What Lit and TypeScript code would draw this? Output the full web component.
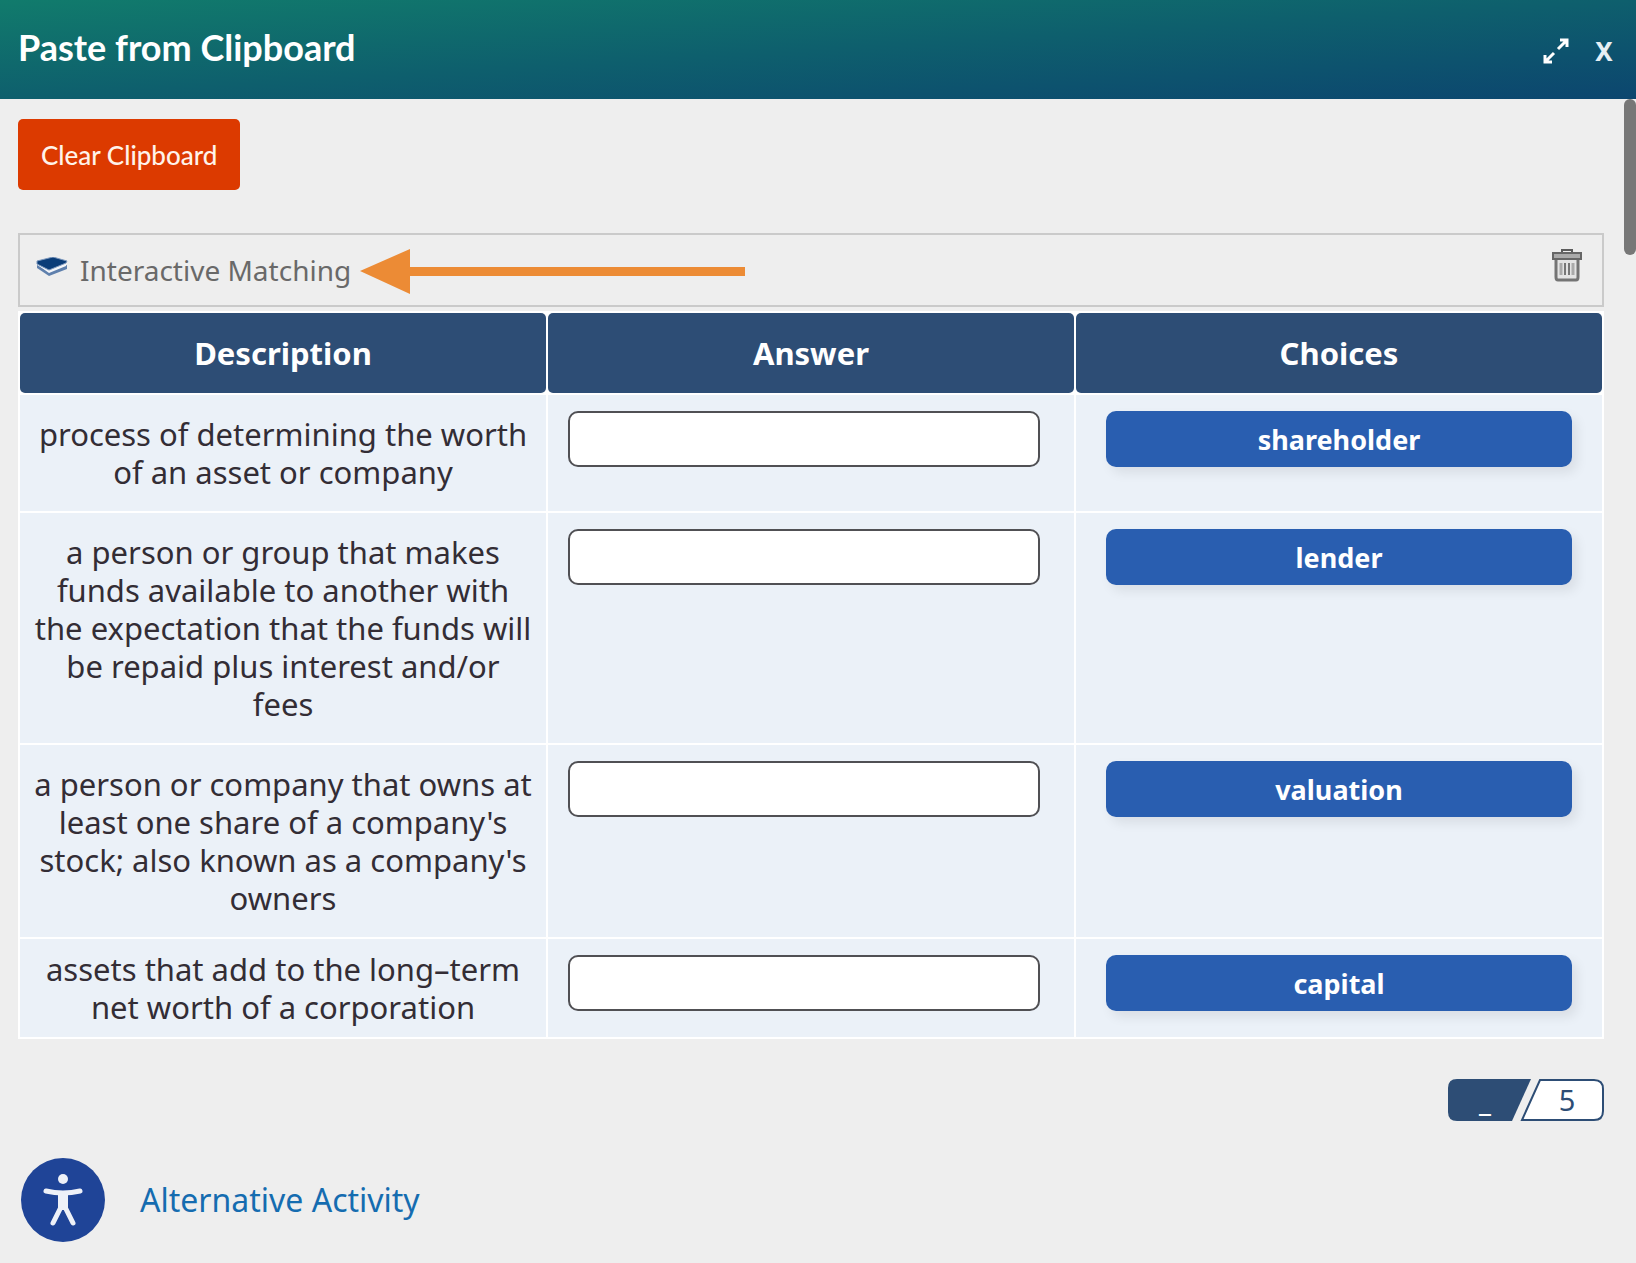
import { LitElement, html, css, svg } from "lit";
import { customElement, state } from "lit/decorators.js";

interface Pair {
  description: string;
  choice: string;
}

const PAIRS: Pair[] = [
  { description: "process of determining the worth of an asset or company", choice: "shareholder" },
  {
    description:
      "a person or group that makes funds available to another with the expectation that the funds will be repaid plus interest and/or fees",
    choice: "lender",
  },
  {
    description:
      "a person or company that owns at least one share of a company's stock; also known as a company's owners",
    choice: "valuation",
  },
  { description: "assets that add to the long\u2013term net worth of a corporation", choice: "capital" },
];

@customElement("matching-table")
class MatchingTable extends LitElement {
  static styles = css`
    :host {
      display: block;
    }
    .table {
      width: 100%;
      table-layout: fixed;
      border-collapse: separate;
      border-spacing: 2px;
      background: #fff;
      color: #332d35;
    }
    .head {
      height: 80px;
      padding: 0;
      border-radius: 5px;
      background: #2d4d75;
      color: #fff;
      font-size: 31px;
      font-weight: 700;
      line-height: 40px;
    }
    .cell {
      padding: 16px 30px 0;
      background: #ebf1f8;
      vertical-align: top;
    }
    .term {
      padding: 20px 13px;
      text-align: center;
      font-size: 31px;
      line-height: 38px;
    }
    .row:last-child .term {
      padding: 11px 13px;
    }
    .slot {
      padding: 16px 34px 0 20px;
    }
    .answer,
    .choice {
      display: block;
      box-sizing: border-box;
      width: 100%;
      height: 56px;
      border-radius: 10px;
      font: inherit;
      font-size: 27px;
    }
    .answer {
      padding: 0 12px;
      border: 2px solid #505054;
      background: #fff;
    }
    .choice {
      padding: 0;
      border: 0;
      background: #295eb0;
      color: #fff;
      font-weight: 700;
      box-shadow: 5px 6px 12px rgba(0, 0, 0, 0.08);
    }
  `;

  render() {
    return html`
      <table class="table">
        <thead>
          <tr>
            <th class="head" scope="col">Description</th>
            <th class="head" scope="col">Answer</th>
            <th class="head" scope="col">Choices</th>
          </tr>
        </thead>
        <tbody>
          ${PAIRS.map(
            (pair, i) => html`
              <tr class="row">
                <td class="cell term" id="term-${i}">${pair.description}</td>
                <td class="cell slot">
                  <input class="answer" type="text" aria-labelledby="term-${i}" />
                </td>
                <td class="cell"><button class="choice" type="button">${pair.choice}</button></td>
              </tr>
            `,
          )}
        </tbody>
      </table>
    `;
  }
}

@customElement("score-badge")
class ScoreBadge extends LitElement {
  static styles = css`
    :host {
      display: block;
      width: 156px;
      height: 42px;
    }
    .badge {
      display: grid;
      height: 100%;
    }
    .shape,
    .values {
      grid-area: 1 / 1;
    }
    .values {
      display: grid;
      grid-template-columns: 74px 74px;
      align-items: center;
      text-align: center;
      font-size: 29px;
      line-height: 42px;
      z-index: 1;
    }
    .got {
      color: #fff;
      font-weight: 700;
    }
    .total {
      padding-left: 16px;
      color: #2d4d75;
    }
  `;

  render() {
    return html`
      <div class="badge">
        <svg class="shape" width="156" height="42" viewBox="0 0 156 42" aria-hidden="true">
          <path d="M9 0H83L64 42H9Q0 42 0 33V9Q0 0 9 0Z" fill="#2d4d75" />
          <path
            d="M92 1H146Q155 1 155 10V32Q155 41 146 41H74Z"
            fill="#fff"
            stroke="#2d4d75"
            stroke-width="2"
          />
        </svg>
        <div class="values"><span class="got">_</span><span class="total">5</span></div>
      </div>
    `;
  }
}

const stackIcon = svg`
  <path d="M1 8V11L13 19L31 12V8L13 15Z" fill="#5f80ad" />
  <path d="M2 7V8L13 16L30 9V6L13 14Z" fill="#f4f6fa" />
  <path d="M1 4L17 0L31 4L30 6L13 13L1 7Z" fill="#0b3d78" stroke="#7b97bd" stroke-width="1" />`;

const trashIcon = svg`
  <path d="M10 4V1H20V4" fill="none" stroke="#5c5c5c" stroke-width="2" />
  <rect x="1" y="4" width="28" height="6" fill="#aaa" stroke="#666" stroke-width="2" />
  <path d="M4 11V28Q4 31 6 31H24Q26 31 26 28V11" fill="#e4e4e4" stroke="#747474" stroke-width="3" />
  <path d="M9 14V26M21 14V26" stroke="#aaa" stroke-width="3" />
  <path d="M13 14V26M17 14V26" stroke="#777" stroke-width="2" />`;

@customElement("app-root")
class AppRoot extends LitElement {
  static styles = css`
    :host {
      display: block;
      min-height: 100vh;
      background: #eee;
      font-family: "Noto Sans", "Open Sans", sans-serif;
    }
    .bar {
      display: flex;
      align-items: center;
      box-sizing: border-box;
      height: 99px;
      padding: 0 18px 6px;
      background: linear-gradient(to bottom right, #117b6c, #0e5f6d 50%, #0c466f);
      color: #fff;
    }
    .title {
      flex: 1;
      margin: 0;
      font-family: Lato, sans-serif;
      font-size: 36px;
      font-weight: 700;
      line-height: 48px;
    }
    .tools {
      display: flex;
      align-items: center;
      gap: 20px;
      padding-top: 8px;
    }
    .tool {
      display: grid;
      place-items: center;
      width: 28px;
      height: 32px;
      padding: 0;
      border: 0;
      background: none;
      color: #e6eff4;
      font: 700 26px/32px "Noto Sans", sans-serif;
    }
    .content {
      position: relative;
      padding: 20px 32px 21px 18px;
    }
    .thumb {
      position: absolute;
      top: 0;
      right: 0;
      width: 12px;
      height: 156px;
      border-radius: 6px;
      background: #777;
    }
    .clear {
      display: block;
      height: 71px;
      margin-bottom: 43px;
      padding: 0 23px;
      border: 0;
      border-radius: 5px;
      background: #dc3a00;
      color: #fff3ea;
      font: 500 26px/32px Lato, sans-serif;
    }
    .item {
      position: relative;
      display: flex;
      align-items: center;
      gap: 12px;
      box-sizing: border-box;
      height: 74px;
      margin-bottom: 4px;
      padding: 0 20px 0 16px;
      border: 2px solid #cacaca;
    }
    .name {
      flex: 1;
      color: #696969;
      font-size: 28px;
      line-height: 36px;
    }
    .arrow {
      position: absolute;
      top: 14px;
      left: 340px;
    }
    .stack {
      padding-bottom: 6px;
    }
    .trash {
      padding: 0 0 10px;
      border: 0;
      background: none;
      line-height: 0;
    }
    .score {
      margin: 40px 0 37px auto;
    }
    .alternative {
      display: flex;
      align-items: center;
      gap: 35px;
      padding-left: 3px;
    }
    .link {
      color: #156cb0;
      font-size: 32px;
      line-height: 40px;
      text-decoration: none;
    }
  `;

  @state() private cleared = false;

  render() {
    return html`
      <header class="bar">
        <h1 class="title">Paste from Clipboard</h1>
        <div class="tools">
          <button class="tool" type="button" aria-label="Expand">
            <svg width="26" height="26" viewBox="0 0 26 26" aria-hidden="true">
              <path
                d="M15 11L23 3M17 2H24V9M11 15L3 23M2 17V24H9"
                fill="none"
                stroke="#fff"
                stroke-width="3"
              />
            </svg>
          </button>
          <button class="tool" type="button" aria-label="Close">X</button>
        </div>
      </header>
      <main class="content">
        <div class="thumb"></div>
        <button class="clear" type="button" @click=${() => (this.cleared = true)}>
          Clear Clipboard
        </button>
        ${this.cleared
          ? null
          : html`
              <section class="item">
                <svg class="stack" width="32" height="20" viewBox="0 0 32 20" aria-hidden="true">
                  ${stackIcon}
                </svg>
                <span class="name">Interactive Matching</span>
                <svg class="arrow" width="386" height="46" viewBox="0 0 386 46" aria-hidden="true">
                  <path d="M0 22L50 0V18H385V27H50V45Z" fill="#ec8b35" />
                </svg>
                <button class="trash" type="button" aria-label="Delete">
                  <svg width="30" height="33" viewBox="0 0 30 33" aria-hidden="true">${trashIcon}</svg>
                </button>
              </section>
              <matching-table></matching-table>
              <score-badge class="score"></score-badge>
              <div class="alternative">
                <svg width="84" height="84" viewBox="0 0 84 84" aria-hidden="true">
                  <circle cx="42" cy="42" r="42" fill="#1f4497" />
                  <circle cx="42" cy="21" r="5" fill="#eef1f8" />
                  <path
                    d="M25 33Q42 37 59 33"
                    fill="none"
                    stroke="#eef1f8"
                    stroke-width="5"
                    stroke-linecap="round"
                  />
                  <path d="M37 34H47V52H37Z" fill="#eef1f8" />
                  <path
                    d="M39 51L32 65M45 51L52 65"
                    fill="none"
                    stroke="#eef1f8"
                    stroke-width="5"
                    stroke-linecap="round"
                  />
                </svg>
                <a class="link" href="#alternative">Alternative Activity</a>
              </div>
            `}
      </main>
    `;
  }
}
